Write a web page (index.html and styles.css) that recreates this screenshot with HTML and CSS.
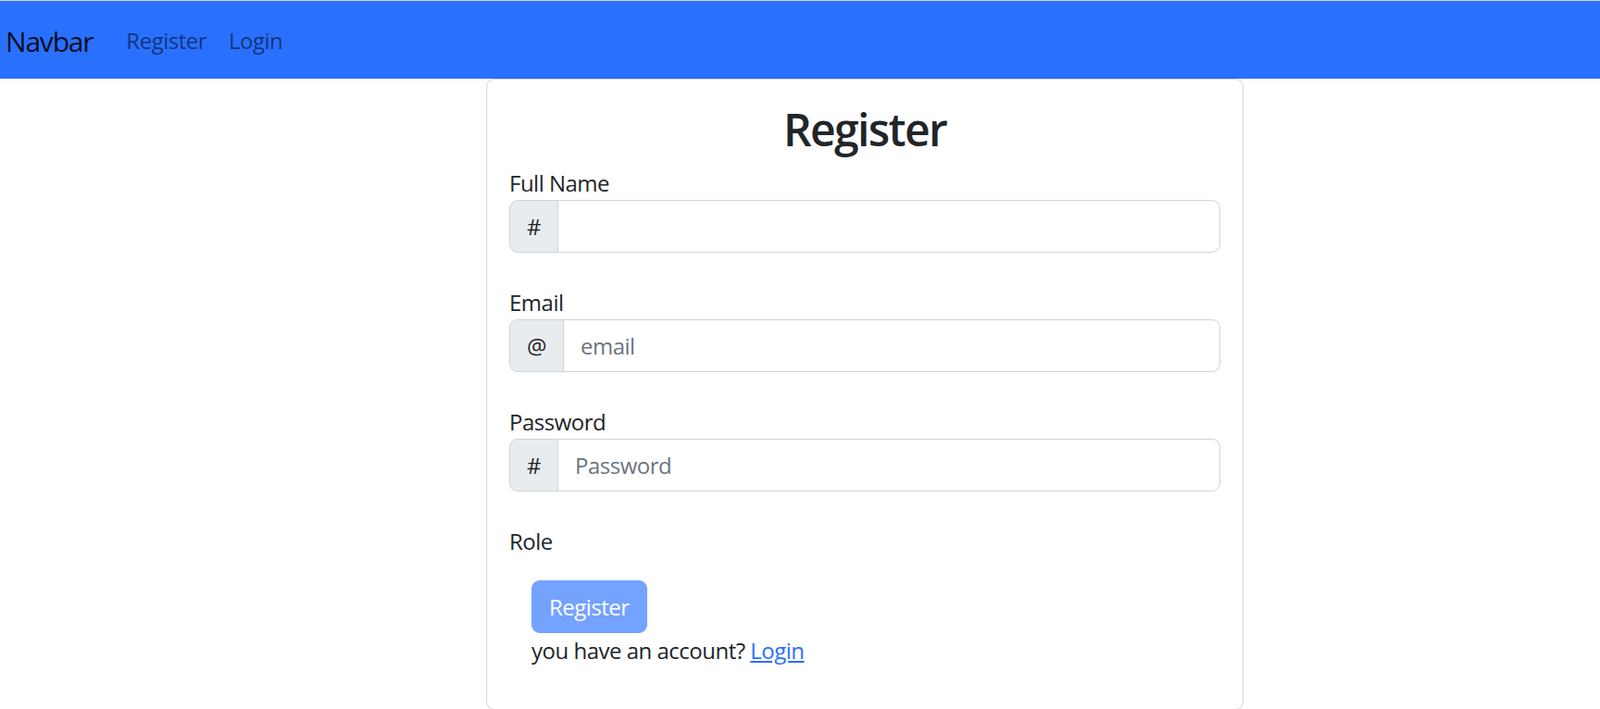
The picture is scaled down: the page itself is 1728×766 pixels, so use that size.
FILE: index.html
```html
<!DOCTYPE html>
<html lang="en">
<head>
<meta charset="utf-8">
<title>Register</title>
<link rel="stylesheet" href="styles.css">
</head>
<body>
<nav class="navbar">
  <a class="brand" href="#">Navbar</a>
  <a class="nav-link" href="#">Register</a>
  <a class="nav-link" href="#">Login</a>
</nav>
<main class="page">
  <section class="card">
    <h2 class="title">Register</h2>
    <div class="group">
      <label class="label">Full Name</label>
      <div class="input-group">
        <span class="addon">#</span>
        <input class="input" type="text">
      </div>
    </div>
    <div class="group">
      <label class="label">Email</label>
      <div class="input-group">
        <span class="addon">@</span>
        <input class="input" type="email" placeholder="email">
      </div>
    </div>
    <div class="group">
      <label class="label">Password</label>
      <div class="input-group">
        <span class="addon">#</span>
        <input class="input" type="password" placeholder="Password">
      </div>
    </div>
    <div class="group-role">
      <label class="label">Role</label>
    </div>
    <div class="actions">
      <button class="btn" type="button" disabled>Register</button>
      <div class="hint">you have an account? <a class="link" href="#">Login</a></div>
    </div>
  </section>
</main>
</body>
</html>
```
FILE: styles.css
```css
* { box-sizing: border-box; }
html, body { margin: 0; padding: 0; }
body {
  font-family: "Open Sans", "Noto Sans", sans-serif;
  font-size: 24px;
  line-height: 1.5;
  color: #212529;
  background: #fff;
  letter-spacing: -0.5px;
  border-top: 1px solid #d4d4d4;
  overflow: hidden;
  height: 766px;
}
.navbar {
  background: #2970ff;
  height: 84px;
  display: flex;
  align-items: center;
  padding: 2px 0 0 6px;
}
.brand {
  font-size: 30px;
  letter-spacing: -1.2px;
  color: rgba(0, 0, 0, 0.9);
  text-decoration: none;
  margin-right: 24px;
}
.nav-link {
  color: rgba(0, 0, 0, 0.55);
  text-decoration: none;
  padding: 0 12px;
}
.page {
  padding-left: 525px;
}
.card {
  width: 818px;
  height: 682px;
  border: 1px solid #d6d6d6;
  border-radius: 9px;
  padding: 25px 24px 24px;
}
.title {
  margin: 0 0 11px;
  text-align: center;
  font-size: 48px;
  line-height: 1.2;
  font-weight: 600;
  letter-spacing: -1.6px;
}
.group { margin-bottom: 36px; }
.label { display: block; }
.input-group {
  display: flex;
  height: 57px;
}
.addon {
  display: flex;
  align-items: center;
  padding: 2px 18px 0;
  background: #e9ecef;
  border: 1px solid #ced4da;
  border-radius: 9px 0 0 9px;
  color: #212529;
}
.input {
  flex: 1;
  min-width: 0;
  margin-left: -1px;
  border: 1px solid #ced4da;
  border-radius: 0 9px 9px 0;
  padding: 2px 18px 0;
  font: inherit;
  letter-spacing: -0.5px;
  color: #212529;
  outline: none;
}
.input::placeholder { color: #6c757d; opacity: 1; }
.actions {
  padding-left: 24px;
  margin-top: 24px;
}
.btn {
  display: block;
  height: 57px;
  padding: 2px 18px 0;
  font: inherit;
  letter-spacing: -0.5px;
  color: #fff;
  background: #74a2ff;
  border: 1px solid #74a2ff;
  border-radius: 9px;
}
.hint { padding-top: 1px; }
.link { color: #2970ff; }
```
